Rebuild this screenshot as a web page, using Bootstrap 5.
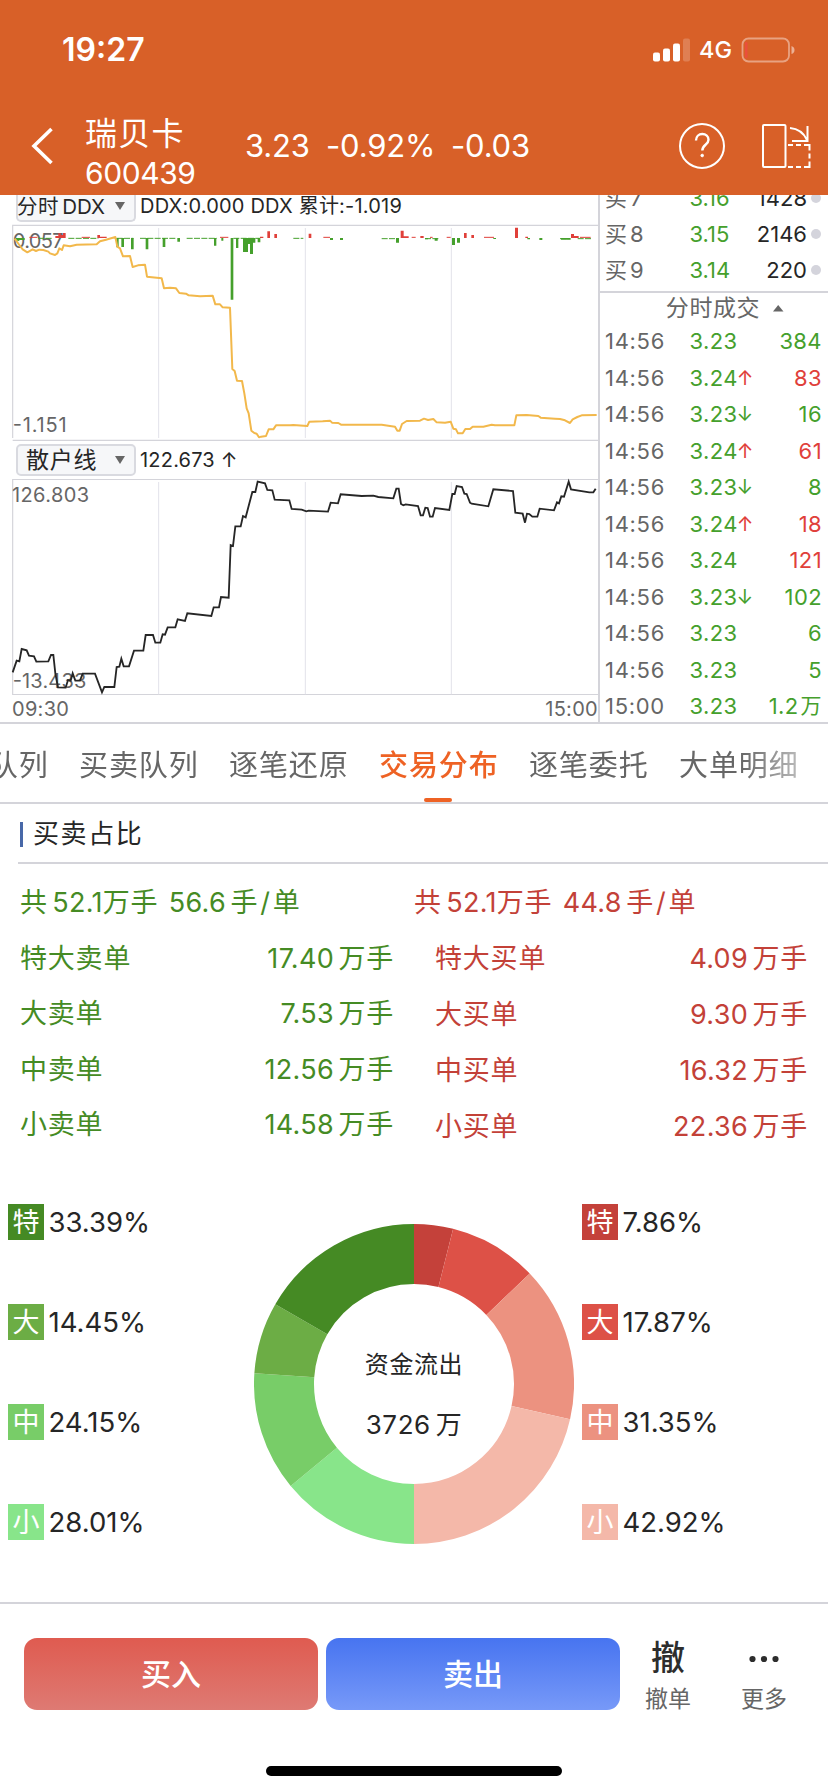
<!DOCTYPE html>
<html lang="zh-CN">
<head>
<meta charset="utf-8">
<meta name="viewport" content="width=device-width, initial-scale=1">
<title>瑞贝卡 600439</title>
<link rel="stylesheet" href="https://cdn.jsdelivr.net/npm/bootstrap@5.3.0/dist/css/bootstrap.min.css">
<style>
:root{--line:#d4d4da;--ink:#262626;--mute:#666;--up:#e0403a;--down:#45a02c;--buy:#c34138;--sell:#458b24}
body{font-family:Inter,"Noto Sans CJK SC",sans-serif;color:var(--ink);width:828px;height:1792px;overflow:hidden;background:#fff;font-size:22px;white-space:nowrap}
svg{display:block}
.top-bar{background:#d86028;height:195px}
.status{height:100px;padding:0 33px 0 62px}
.clock{font-size:32px;font-weight:600;line-height:100px}
.net{font-size:23.5px;font-weight:500;line-height:102px}
.title-row{height:95px}
.stock-block{width:160px;margin-top:11px}
.stock-name{font-size:32px;line-height:40px;letter-spacing:1.3px}
.stock-code{font-size:30px;line-height:38px;letter-spacing:-.4px}
.quote-line{font-size:31px;line-height:36px;margin-top:-3px;letter-spacing:-.2px}
.market{height:529px;border-bottom:2px solid var(--line)}
.charts{width:600px;border-right:2px solid var(--line);flex:none}
.bar-a{height:29px;padding-left:16px}
.bar-b{height:36px;padding-left:16px}
.picker{width:120px;border:2px solid #d9dae0;border-radius:5px;background:#f6f7f9}
.bar-a .picker{height:27px;border-top:0;border-radius:0 0 5px 5px;font-size:20.500px;line-height:20px;padding-bottom:2px}
.bar-b .picker{height:32px;font-size:23px;line-height:28px;letter-spacing:.8px}
.reading{font-size:20px;margin-left:4px;letter-spacing:.2px}
.axis{height:27px;padding:0 0 0 12px;font-size:20px;line-height:27px;color:var(--mute);letter-spacing:.3px}
.book{width:228px}
.depth-row{height:36px;padding:0 7px 0 5px;line-height:36px}
.depth-row i{width:10px;height:10px;border-radius:50%;background:#d4d4dc;margin-left:4px}
.depth-row em{font-style:normal;margin-left:3px}
.c-label{width:84.500px;color:var(--mute)}
.trade-head{height:32px;border-top:2px solid var(--line);font-size:23px;line-height:30px;color:var(--mute);padding-left:22px}
.tick-row{height:36.55px;line-height:36.55px;padding:0 6px 0 5px;letter-spacing:.4px}
.tick-row .c-label{letter-spacing:.7px}
.arw{margin-left:-1px;font-size:20px}
.g{color:var(--down)}.r{color:var(--up)}
.tabs-strip{height:80px;border-bottom:2px solid var(--line)}
.tabs-inner{gap:32px;margin-left:-71px;font-size:29px;letter-spacing:.9px;color:var(--mute);-webkit-mask-image:linear-gradient(90deg,#000 0,#000 812px,#0007 868px);mask-image:linear-gradient(90deg,#000 0,#000 812px,#0007 868px)}
.tabs-inner span{width:118px;line-height:72px;padding-top:6px;flex:none}
.tabs-inner .on{color:#ee6224;font-weight:500;position:relative}
.on::after{content:"";position:absolute;left:45px;bottom:0;width:28px;height:4px;border-radius:2px;background:#ee6224}
.section-title{height:60px;margin-left:18px;border-bottom:2px solid var(--line);font-size:26px;letter-spacing:1.6px;padding-top:2px}
.section-title b{width:3px;height:25px;background:#4868a8;margin:0 10px 0 2px}
.sums{font-size:27px;padding:11px 20px 0 20px;height:288px;letter-spacing:.8px;word-spacing:-4px}
.sell-col{width:374px;color:var(--sell);line-height:55.500px}
.buy-col{width:394px;color:var(--buy);line-height:55.900px}
.buy-col .line-item{padding-left:21px}
.num{letter-spacing:.3px}
.gap-num{margin-left:6px;letter-spacing:.3px}
.slash{margin:0 2px}
.dist{height:450px;padding-top:52px}
.legend-col{width:246px;padding-left:8px;gap:64px}
.legend-item{height:36px;font-size:27.500px;line-height:36px}
.chip{width:36px;height:36px;color:#fff;font-size:27px;text-align:center;margin-right:4.500px;line-height:37px}
.ring{width:320px;height:320px;margin:20px 8px 0 0}
.ring-text{font-size:24px;gap:24px;padding-top:22px;letter-spacing:.6px}
.ring-text div{line-height:36px}
.ring-text .amount{font-size:26px;word-spacing:-3px}
.actions{height:190px;border-top:2px solid var(--line);padding:34px 0 0 24px}
.trade-row{height:72px}
.trade-btn{width:294px;height:72px;border-radius:13px;border:0;color:#fff;font-size:30px;font-weight:500;line-height:72px;padding:0;flex:none}
.b-buy{background:linear-gradient(#df5b50,#de7a73);margin-right:8px}
.b-sell{background:linear-gradient(#4774f0,#7799f8)}
.mini{width:96px;text-align:center;font-size:23px;line-height:36px;color:var(--mute);flex:none}
.mini .glyph{height:43px;line-height:40px;font-size:34px;font-weight:500;color:#2d2d2d}
.home-pill{width:296px;height:10px;border-radius:5px;background:#000;margin:56px 0 0 242px}
</style>
</head>
<body>
<header class="top-bar text-white">
  <div class="status d-flex align-items-center">
    <div class="clock me-auto">19:27</div>
    <svg width="38" height="24" viewBox="0 0 38 24" fill="#fff"><rect y="14.500" width="7" height="9" rx="2"/><rect x="10" y="10.500" width="7" height="13" rx="2"/><rect x="20" y="5.500" width="7" height="18" rx="2"/><rect x="30" y=".5" width="7" height="23" rx="2" opacity=".2"/></svg>
    <div class="net ms-2">4G</div>
    <svg style="margin-left:9px" width="54" height="26" viewBox="0 0 54 26"><rect x="1.500" y="1.500" width="46.500" height="23" rx="6" fill="none" stroke="#fff" stroke-opacity=".42" stroke-width="1.800"/><rect x="4" y="5" width="2.500" height="16" rx="1" fill="#ea4f3b"/><path d="M50.500 9q3 1 3 4t-3 4z" fill="#fff" opacity=".5"/></svg>
  </div>
  <div class="title-row d-flex align-items-center">
    <svg width="85" height="95" viewBox="0 0 85 95" fill="none" stroke="#fff" stroke-width="3.600"><path d="M51.500 29 34 46 51.500 63"/></svg>
    <div class="stock-block"><div class="stock-name">瑞贝卡</div><div class="stock-code">600439</div></div>
    <div class="quote-line d-flex"><span style="width:81px">3.23</span><span style="width:125px">-0.92%</span><span>-0.03</span></div>
    <svg class="ms-auto" width="160" height="95" viewBox="668 100 160 95" fill="none" stroke="#fff" stroke-width="2"><circle cx="702" cy="146" r="22"/><path d="M696 140.500c0-4 2.800-6.500 6.300-6.500s6.200 2.500 6.200 5.800c0 5-6.200 5-6.200 10.700" stroke-width="2.400"/><circle cx="702.200" cy="155.500" r="1.300" fill="#fff" stroke-width="1"/><rect x="763" y="125" width="22.500" height="42" rx="1"/><path d="M788 145h5m3 0h5m3 0h5.500v5.500m0 3v5m0 3v5.500H804m-3 0h-5m-3 0h-5"/><path d="M790 128q12 1 17 12M807.500 126v15H792"/></svg>
  </div>
</header>

<section class="market d-flex">
  <div class="charts">
    <div class="bar-a d-flex align-items-start">
      <div class="picker d-flex align-items-center"><span style="letter-spacing:.6px;margin-left:-1px">分时</span><span style="margin-left:3px">DDX</span><svg class="ms-auto me-2" width="11" height="9" viewBox="0 0 11 9"><path d="M0 0h10L5 8z" fill="#666"/></svg></div>
      <div class="reading" style="line-height:23px">DDX:0.000 DDX 累计:-1.019</div>
    </div>
    <svg width="598" height="218" viewBox="0 102 1794 654">
      <path d="M38 106H1794M38 751H1794M38 104V744" stroke="#d4d4da" stroke-width="3.500" fill="none"/>
      <path d="M476 114V744M916 114V744M1354 114V744" stroke="#e2e2ea" stroke-width="3"/>
      <text x="38" y="173" font-size="60" fill="#666" textLength="153">0.057</text>
      <text x="38" y="726" font-size="60" fill="#666" textLength="162">-1.151</text>
      <path d="M115 145h40M205 145h90M350 145h50M420 145h110M560 145h90M700 145h80M880 145h30M1145 146h40M1275 146h40M1680 146h30M1733 146h40" stroke="#45a02c" stroke-width="3" stroke-dasharray="18 4"/>
      <path d="M88 142h24M245 142h25M660 142h25M970 142h20M1235 142h12M1290 142h8M1340 142h12M1452 142h30M1740 142h32" stroke="#e0403a" stroke-width="3"/>
      <path fill="#45a02c" d="M44 144h30v6H60l-6 4zM349 144h7v28h-7zM364 144h8v27h-8zM393 144h8v34h-8zM437 144h8v34h-8zM488 144h8v27h-8zM532 144h8v11h-8zM642 144h7v23h-7zM664 144h6v8h-6zM692 144h8v185h-8zM708 144h7v30h-7zM729 144h15v42h-15zM744 144h7v18h-7zM750 144h9v48h-9zM758 144h8v14h-8zM773 144h8v13h-8zM990 144h9v6h-9zM1020 144h9v6h-9zM1188 144h9v14h-9zM1275 144h9v4h-9zM1304 144h9v8h-9zM1356 144h9v21h-9zM1371 144h9v14h-9zM1480 144h8v3h-8zM1582 144h8v4h-8zM1618 144h9v6h-9zM1683 144h29v5h-29z"/>
      <path fill="#e0403a" d="M166 138h9v-8h7v5h7v-6h8v15h-31zM292 135h8v9h-8zM300 140h20v4h-20zM780 140h10v4h-10zM802 124h8v20h-8zM823 132h8v12h-8zM926 131h8v13h-8zM1202 122h9v17h15v5h-24zM1261 138h10v6h-10zM1392 129h8v15h-8zM1414 135h8v9h-8zM1545 113h9v31h-9zM1576 140h8v4h-8zM1713 132h9v6h14v6h-23z"/>
      <polyline fill="none" stroke="#f2b84b" stroke-width="6" stroke-linejoin="round" points="44,146 58,165 68,178 82,187 98,178 108,183 118,179 130,180 145,185 150,190 165,195 172,190 178,175 186,180 191,166 210,169 230,164 290,163 300,154 318,149 346,141 352,170 360,175 369,199 390,198 398,231 414,226 435,224 441,260 485,265 492,295 510,293 528,295 538,309 558,311 566,316 600,319 638,317 646,343 660,343 668,352 690,353 697,537 704,543 711,572 726,573 733,610 740,655 746,670 754,722 763,729 770,731 777,742 783,740 798,738 806,718 820,718 828,706 870,706 880,705 922,708 928,695 968,694 990,692 996,698 1015,699 1023,704 1145,704 1185,710 1192,722 1199,722 1206,702 1220,693 1260,692 1272,686 1284,690 1300,687 1310,697 1335,698 1352,695 1360,716 1368,718 1374,730 1388,730 1396,717 1410,717 1418,710 1450,710 1475,704 1485,706 1543,706 1549,676 1580,675 1615,678 1622,683 1665,686 1680,687 1695,691 1710,699 1718,688 1732,681 1745,676 1790,675"/>
    </svg>
    <div class="bar-b d-flex align-items-center">
      <div class="picker d-flex align-items-center"><span style="margin-left:8px">散户线</span><svg class="ms-auto me-2" width="11" height="9" viewBox="0 0 11 9"><path d="M0 0h10L5 8z" fill="#666"/></svg></div>
      <div class="reading">122.673 ↑</div>
    </div>
    <svg width="598" height="218" viewBox="0 114 1794 654">
      <path d="M38 118.500H1794M38 763.500H1794M38 117V765" stroke="#d4d4da" stroke-width="3.500" fill="none"/>
      <path d="M476 126V763M916 126V763M1354 126V763" stroke="#e2e2ea" stroke-width="3"/>
      <text x="36" y="186" font-size="60" fill="#666" textLength="231">126.803</text>
      <text x="38" y="744" font-size="60" fill="#666" textLength="221">-13.433</text>
      <polyline fill="none" stroke="#262626" stroke-width="5.500" points="38,697 50,662 58,664 65,627 80,631 87,647 102,649 109,665 145,664 153,645 160,645 166,700 174,742 197,743 204,720 212,722 218,700 226,722 240,722 248,701 285,701 306,757 313,741 343,741 350,681 358,680 364,656 371,679 387,679 402,632 430,632 437,585 459,585 466,608 481,608 488,583 495,584 503,562 526,562 533,538 555,543 562,520 634,528 641,502 657,502 663,471 686,473 692,315 699,318 706,259 722,259 729,228 737,232 757,156 766,156 773,125 795,130 802,150 817,151 824,179 868,181 875,207 905,209 919,214 926,212 984,215 992,188 1014,190 1022,163 1085,168 1120,167 1135,171 1180,175 1189,146 1196,146 1203,192 1210,196 1217,193 1254,198 1262,226 1269,226 1276,203 1283,204 1290,230 1298,230 1305,204 1348,210 1357,162 1364,162 1370,138 1386,141 1393,161 1400,162 1410,188 1415,191 1465,199 1480,148 1539,153 1546,218 1568,221 1575,248 1581,221 1588,222 1597,230 1612,230 1619,206 1662,211 1671,187 1677,190 1684,169 1692,170 1706,125 1713,148 1768,157 1780,157 1787,146"/>
    </svg>
    <div class="axis d-flex justify-content-between"><span>09:30</span><span>15:00</span></div>
  </div>
  <div class="book">
    <div class="overflow-hidden d-flex flex-column justify-content-end" style="height:96px;padding-bottom:3px">
      <div class="depth-row d-flex align-items-center flex-shrink-0"><span class="c-label">买<em>7</em></span><span class="g">3.16</span><span class="ms-auto">1428</span><i></i></div>
      <div class="depth-row d-flex align-items-center flex-shrink-0"><span class="c-label">买<em>8</em></span><span class="g">3.15</span><span class="ms-auto">2146</span><i></i></div>
      <div class="depth-row d-flex align-items-center flex-shrink-0"><span class="c-label">买<em>9</em></span><span class="g">3.14</span><span class="ms-auto">220</span><i></i></div>
    </div>
    <div class="trade-head d-flex align-items-center justify-content-center"><span style="letter-spacing:.6px">分时成交</span><svg style="margin-left:13px" width="11" height="7" viewBox="0 0 11 7"><path d="M0 6.500h10.500L5.200 0z" fill="#666"/></svg></div>
    <div class="ticks">
      <div class="tick-row d-flex"><span class="c-label">14:56</span><span class="g">3.23</span><span class="ms-auto g">384</span></div>
      <div class="tick-row d-flex"><span class="c-label">14:56</span><span class="g">3.24</span><span class="r arw">↑</span><span class="ms-auto r">83</span></div>
      <div class="tick-row d-flex"><span class="c-label">14:56</span><span class="g">3.23</span><span class="g arw">↓</span><span class="ms-auto g">16</span></div>
      <div class="tick-row d-flex"><span class="c-label">14:56</span><span class="g">3.24</span><span class="r arw">↑</span><span class="ms-auto r">61</span></div>
      <div class="tick-row d-flex"><span class="c-label">14:56</span><span class="g">3.23</span><span class="g arw">↓</span><span class="ms-auto g">8</span></div>
      <div class="tick-row d-flex"><span class="c-label">14:56</span><span class="g">3.24</span><span class="r arw">↑</span><span class="ms-auto r">18</span></div>
      <div class="tick-row d-flex"><span class="c-label">14:56</span><span class="g">3.24</span><span class="ms-auto r">121</span></div>
      <div class="tick-row d-flex"><span class="c-label">14:56</span><span class="g">3.23</span><span class="g arw">↓</span><span class="ms-auto g">102</span></div>
      <div class="tick-row d-flex"><span class="c-label">14:56</span><span class="g">3.23</span><span class="ms-auto g">6</span></div>
      <div class="tick-row d-flex"><span class="c-label">14:56</span><span class="g">3.23</span><span class="ms-auto g">5</span></div>
      <div class="tick-row d-flex"><span class="c-label">15:00</span><span class="g">3.23</span><span class="ms-auto g">1.2</span><span class="g" style="margin-left:2px;font-size:21px">万</span></div>
    </div>
  </div>
</section>

<nav class="tabs-strip overflow-hidden">
  <div class="tabs-inner d-flex"><span>委托队列</span><span>买卖队列</span><span>逐笔还原</span><span class="on">交易分布</span><span>逐笔委托</span><span>大单明细</span></div>
</nav>

<main>
  <h2 class="section-title d-flex align-items-center mb-0 fw-normal"><b></b>买卖占比</h2>
  <div class="sums d-flex">
    <div class="sell-col me-auto">
      <div>共 <span class="num">52.1</span>万手 <span class="gap-num">56.6</span> 手<span class="slash">/</span>单</div>
      <div class="line-item d-flex justify-content-between"><span>特大卖单</span><span><span class="num">17.40</span> 万手</span></div>
      <div class="line-item d-flex justify-content-between"><span>大卖单</span><span><span class="num">7.53</span> 万手</span></div>
      <div class="line-item d-flex justify-content-between"><span>中卖单</span><span><span class="num">12.56</span> 万手</span></div>
      <div class="line-item d-flex justify-content-between"><span>小卖单</span><span><span class="num">14.58</span> 万手</span></div>
    </div>
    <div class="buy-col">
      <div>共 <span class="num">52.1</span>万手 <span class="gap-num">44.8</span> 手<span class="slash">/</span>单</div>
      <div class="line-item d-flex justify-content-between"><span>特大买单</span><span><span class="num">4.09</span> 万手</span></div>
      <div class="line-item d-flex justify-content-between"><span>大买单</span><span><span class="num">9.30</span> 万手</span></div>
      <div class="line-item d-flex justify-content-between"><span>中买单</span><span><span class="num">16.32</span> 万手</span></div>
      <div class="line-item d-flex justify-content-between"><span>小买单</span><span><span class="num">22.36</span> 万手</span></div>
    </div>
  </div>
  <div class="dist d-flex">
    <div class="legend-col d-flex flex-column">
      <div class="legend-item d-flex"><span class="chip" style="background:#458a24">特</span>33.39%</div>
      <div class="legend-item d-flex"><span class="chip" style="background:#6cad45">大</span>14.45%</div>
      <div class="legend-item d-flex"><span class="chip" style="background:#78cd68">中</span>24.15%</div>
      <div class="legend-item d-flex"><span class="chip" style="background:#88e58a">小</span>28.01%</div>
    </div>
    <div style="width:8px"></div>
    <div class="ring position-relative">
      <svg width="320" height="320" viewBox="-160 -160 320 320" id="ring" fill="none" stroke-width="60"></svg>
      <div class="ring-text position-absolute top-0 start-0 w-100 h-100 d-flex flex-column align-items-center justify-content-center"><div>资金流出</div><div class="amount">3726 万</div></div>
    </div>
    <div class="legend-col d-flex flex-column" style="padding-left:0">
      <div class="legend-item d-flex"><span class="chip" style="background:#c4413a">特</span>7.86%</div>
      <div class="legend-item d-flex"><span class="chip" style="background:#dd5147">大</span>17.87%</div>
      <div class="legend-item d-flex"><span class="chip" style="background:#ec9280">中</span>31.35%</div>
      <div class="legend-item d-flex"><span class="chip" style="background:#f4b8a9">小</span>42.92%</div>
    </div>
  </div>
</main>

<footer class="actions">
  <div class="trade-row d-flex">
    <button class="trade-btn b-buy">买入</button><button class="trade-btn b-sell">卖出</button>
    <div class="mini"><div class="glyph">撤</div>撤单</div>
    <div class="mini"><div class="glyph d-flex justify-content-center"><svg width="32" height="42" viewBox="0 0 32 42" fill="#2d2d2d"><circle cx="4.500" cy="21" r="3.100"/><circle cx="16" cy="21" r="3.100"/><circle cx="27.500" cy="21" r="3.100"/></svg></div>更多</div>
  </div>
  <div class="home-pill"></div>
</footer>
<script src="https://cdn.jsdelivr.net/npm/bootstrap@5.3.0/dist/js/bootstrap.bundle.min.js"></script>
<script>
// Shares are percentages of each side; each side fills half of the ring, clockwise from the top.
const shares=[[7.86,'#c4413a'],[17.87,'#dd5147'],[31.35,'#ec9280'],[42.92,'#f4b8a9'],[28.01,'#88e58a'],[24.15,'#78cd68'],[14.45,'#6cad45'],[33.39,'#458a24']];
let a=0;
document.getElementById('ring').innerHTML=shares.map(([p,c])=>{
  const s=a*Math.PI/100;a+=p;const e=a*Math.PI/100;
  return `<path stroke="${c}" d="M${130*Math.sin(s)} ${-130*Math.cos(s)}A130 130 0 0 1 ${130*Math.sin(e)} ${-130*Math.cos(e)}"/>`;
}).join('');
</script>
</body>
</html>
